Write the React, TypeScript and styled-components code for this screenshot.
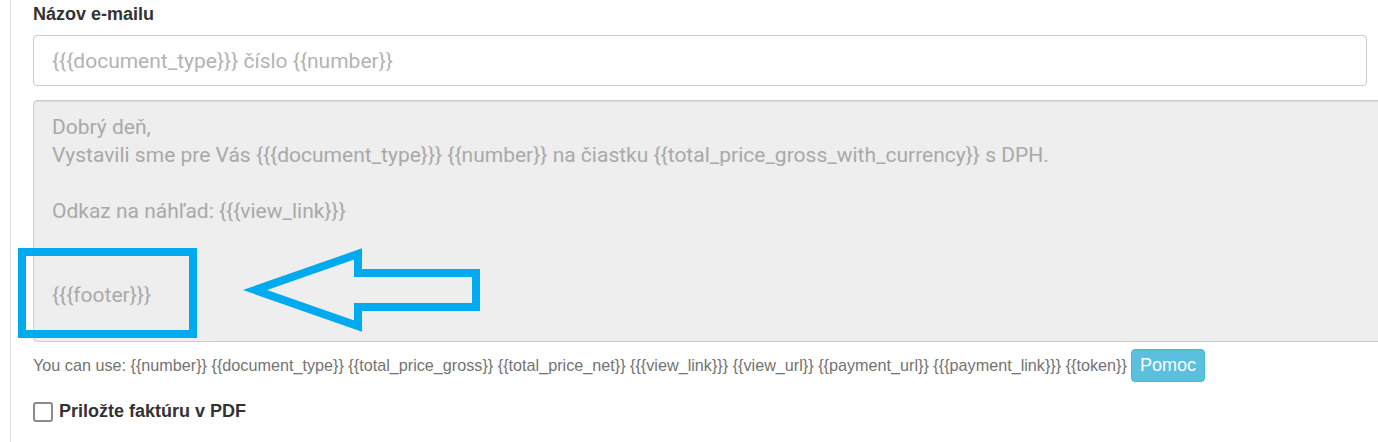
import React from 'react';
import styled, { createGlobalStyle } from 'styled-components';

const GlobalStyle = createGlobalStyle`
    html, body {
        margin: 0;
        padding: 0;
        background: #fff;
        overflow: hidden;
    }
    body {
        font-family: Arial, "Liberation Sans", sans-serif;
    }
`;

const Page = styled.div`
    position: relative;
    height: 442px;
    margin-left: 10px;
    border-left: 1px solid #ddd;
    padding: 3px 0 0 22px;
    box-sizing: border-box;
`;

const Label = styled.label`
    display: block;
    font-family: "Liberation Sans", Arial, sans-serif;
    font-weight: bold;
    font-size: 18px;
    line-height: 22px;
    color: #333;
    margin-bottom: 10px;
`;

const TitleInput = styled.input`
    display: block;
    box-sizing: border-box;
    width: 1334px;
    height: 51px;
    padding: 0 18px;
    border: 1px solid #ccc;
    border-radius: 4px;
    font-family: Roboto, "Open Sans", sans-serif;
    font-size: 21px;
    color: #555;
    outline: none;
    &::placeholder {
        color: #b3b3b3;
    }
`;

const Body = styled.textarea`
    display: block;
    box-sizing: border-box;
    width: 1360px;
    height: 242px;
    margin-top: 14px;
    padding: 12px 18px;
    border: 1px solid #ccc;
    border-radius: 4px 0 0 4px;
    background: #eee;
    box-shadow: inset 0 1px 1px rgba(0, 0, 0, 0.075);
    font-family: Roboto, "Open Sans", sans-serif;
    font-size: 21px;
    line-height: 28px;
    color: #a9a9a9;
    resize: none;
    overflow: hidden;
    outline: none;
`;

const HelpRow = styled.div`
    display: flex;
    align-items: center;
    gap: 4px;
    margin-top: 7px;
    font-family: "Liberation Sans", Arial, sans-serif;
    font-size: 16.2px;
    color: #737373;
    white-space: nowrap;
`;

const HelpButton = styled.button`
    height: 33px;
    padding: 0 8px;
    border: 1px solid #46b8da;
    border-radius: 4px;
    background: #5bc0de;
    color: #fff;
    font-family: "Liberation Sans", Arial, sans-serif;
    font-size: 18px;
    cursor: pointer;
`;

const CheckRow = styled.label`
    display: flex;
    align-items: center;
    gap: 6px;
    margin-top: 19px;
    font-family: "Liberation Sans", Arial, sans-serif;
    font-weight: bold;
    font-size: 18px;
    color: #333;
`;

const Box = styled.span`
    display: inline-block;
    box-sizing: border-box;
    width: 20px;
    height: 20px;
    border: 2px solid #8a8a94;
    border-radius: 3px;
    background: #fff;
`;

const Overlay = styled.svg`
    position: absolute;
    left: -11px;
    top: 0;
    pointer-events: none;
`;

const bodyText = `Dobrý deň,
Vystavili sme pre Vás {{{document_type}}} {{number}} na čiastku {{total_price_gross_with_currency}} s DPH.

Odkaz na náhľad: {{{view_link}}}


{{{footer}}}`;

const tokens = '{{number}} {{document_type}} {{total_price_gross}} {{total_price_net}} {{{view_link}}} {{view_url}} {{payment_url}} {{{payment_link}}} {{token}}';

const App = () => {
    return <>
        <GlobalStyle />
        <Page>
            <Label>Názov e-mailu</Label>
            <TitleInput placeholder="{{{document_type}}} číslo {{number}}" />
            <Body readOnly value={bodyText} />
            <HelpRow>
                <span>You can use: {tokens}</span>
                <HelpButton type="button">Pomoc</HelpButton>
            </HelpRow>
            <CheckRow>
                <Box />
                Priložte faktúru v PDF
            </CheckRow>
            <Overlay width="1378" height="442" viewBox="0 0 1378 442">
                <rect x="22" y="252" width="171" height="82" fill="none" stroke="#00aaee" strokeWidth="8" />
                <polygon
                    points="255,290 358,254 358,273 476,273 476,307 358,307 358,326"
                    fill="none" stroke="#00aaee" strokeWidth="8" strokeLinejoin="miter" strokeMiterlimit="10" />
            </Overlay>
        </Page>
    </>
}

export default App;
